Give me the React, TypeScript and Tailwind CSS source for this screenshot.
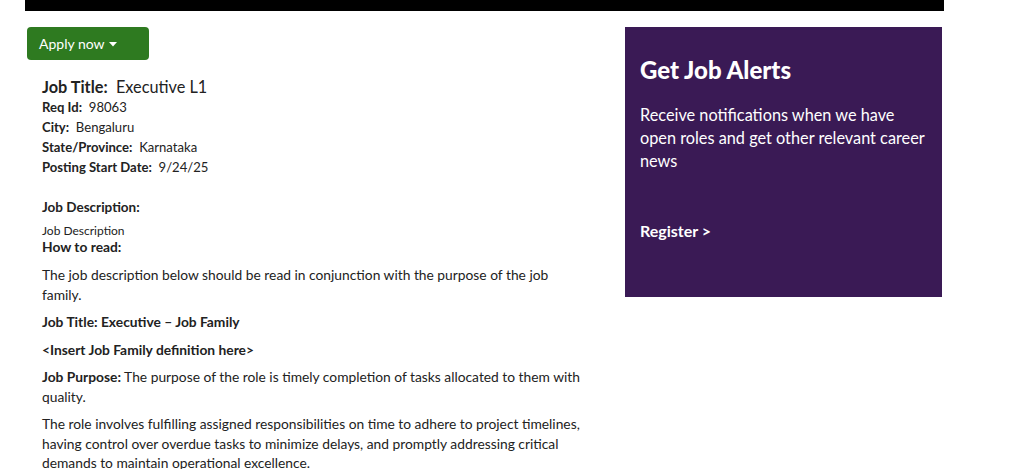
const font = { fontFamily: "Lato, 'Open Sans', sans-serif" };

function InfoRow({ label, value }: { label: string; value: string }) {
  return (
    <div className="text-[13.1px] leading-[20px]">
      <span className="font-bold">{label}:</span>&nbsp; {value}
    </div>
  );
}

export default function App() {
  return (
    <div className="min-h-[469px] bg-white text-[#222]" style={font}>
      <div className="ml-[25px] w-[919px]">
        <div className="h-[11px] bg-black" />
        <div className="mt-[16px] flex">
          {/* main column */}
          <div className="w-[600px]">
            <button className="ml-[2px] flex h-[33px] w-[122px] items-center gap-[4px] rounded-[4px] bg-[#2e7a20] pl-[12px] text-[14px] text-white">
              Apply now
              <svg width="8" height="5" viewBox="0 0 8 5" className="mt-[1px]">
                <path d="M0 0h8L4 4.5z" fill="white" />
              </svg>
            </button>

            <div className="mt-[17px] pl-[17px]">
              <div className="text-[16.3px] leading-[20px]">
                <span className="font-bold">Job Title:</span>&nbsp; Executive L1
              </div>
              <InfoRow label="Req Id" value="98063" />
              <InfoRow label="City" value="Bengaluru" />
              <InfoRow label="State/Province" value="Karnataka" />
              <InfoRow label="Posting Start Date" value="9/24/25" />

              <div className="mt-[20px] text-[13.5px] font-bold leading-[20px]">
                Job Description:
              </div>
              <div className="mt-[6px] text-[12px] leading-[16px]">Job Description</div>
              <div className="text-[13.8px] font-bold leading-[16px]">How to read:</div>

              <div className="mt-[10px] w-[545px] space-y-[8px] text-[13.8px] leading-[19.5px]">
                <p>
                  The job description below should be read in conjunction with the purpose of the job
                  family.
                </p>
                <p className="font-bold">Job Title: Executive – Job Family</p>
                <p className="font-bold">&lt;Insert Job Family definition here&gt;</p>
                <p>
                  <span className="font-bold">Job Purpose:</span> The purpose of the role is timely
                  completion of tasks allocated to them with quality.
                </p>
                <p>
                  The role involves fulfilling assigned responsibilities on time to adhere to project
                  timelines, having control over overdue tasks to minimize delays, and promptly
                  addressing critical demands to maintain operational excellence.
                </p>
              </div>
            </div>
          </div>

          {/* sidebar */}
          <div className="h-[270px] w-[317px] bg-[#3a1a55] px-[15px] pt-[30px] text-white">
            <h2 className="text-[24px] font-black leading-[26px]">Get Job Alerts</h2>
            <p className="mt-[20px] text-[16.3px] leading-[23px]">
              Receive notifications when we have open roles and get other relevant career news
            </p>
            <a className="mt-[49px] block text-[16px] font-bold leading-[20px]">Register &gt;</a>
          </div>
        </div>
      </div>
    </div>
  );
}
